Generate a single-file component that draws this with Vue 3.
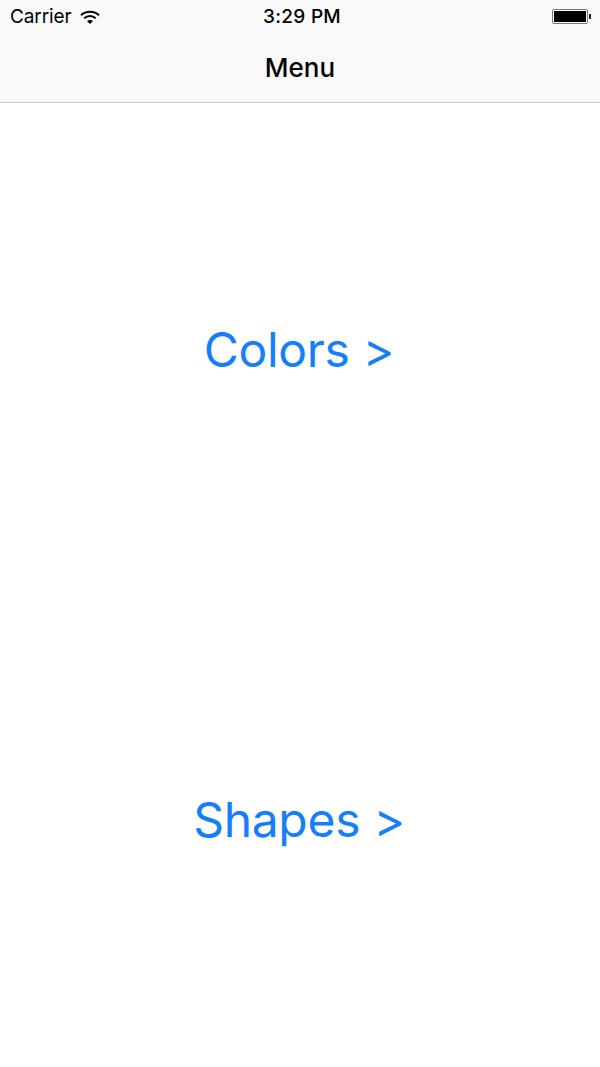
<script setup>
const links = ['Colors >', 'Shapes >'];
</script>

<template>
    <div class="screen">
        <header class="nav-bar">
            <div class="status-bar">
                <div class="status-left">
                    <span>Carrier</span>
                    <svg class="wifi" viewBox="0 0 20 14" width="20" height="14">
                        <path d="M1 5.2C6 .6 14 .6 19 5.2" fill="none" stroke="#000" stroke-width="2" />
                        <path d="M4.2 8.3c3.4-3 8.2-3 11.6 0" fill="none" stroke="#000" stroke-width="2" />
                        <path d="M7 11c1.8-1.4 4.2-1.4 6 0l-3 3z" fill="#000" />
                    </svg>
                </div>
                <span class="time">3:29 PM</span>
                <div class="status-right">
                    <div class="battery"><div class="battery-fill"></div></div>
                    <div class="battery-cap"></div>
                </div>
            </div>
            <div class="title-row">Menu</div>
        </header>
        <main class="menu">
            <a v-for="link in links" :key="link" class="menu-link">{{ link }}</a>
        </main>
    </div>
</template>

<style>
html, body {
    margin: 0;
    background: #fff;
}
</style>

<style scoped>
.screen {
    width: 600px;
    height: 1067px;
    display: flex;
    flex-direction: column;
    font-family: Inter, "Liberation Sans", sans-serif;
    overflow: hidden;
}

.nav-bar {
    height: 102px;
    background: #f9f9f9;
    border-bottom: 1px solid #c8c8c8;
    flex: none;
}

.status-bar {
    height: 33px;
    padding: 0 9px 0 10px;
    display: grid;
    grid-template-columns: 1fr auto 1fr;
    align-items: center;
    font-size: 19px;
    color: #000;
}

.status-left {
    display: flex;
    align-items: center;
    gap: 8px;
    font-weight: 400;
    letter-spacing: -0.1px;
}

.wifi {
    display: block;
}

.time {
    font-weight: 500;
    letter-spacing: 0.3px;
    padding-left: 3px;
}

.status-right {
    display: flex;
    align-items: center;
    justify-content: flex-end;
}

.battery {
    width: 36px;
    height: 15px;
    box-sizing: border-box;
    border: 1px solid #777;
    border-radius: 2px;
    padding: 1px;
}

.battery-fill {
    height: 100%;
    background: #000;
}

.battery-cap {
    width: 2px;
    height: 5px;
    background: #222;
    margin-left: 1px;
}

.title-row {
    height: 68px;
    display: flex;
    align-items: center;
    justify-content: center;
    font-size: 26px;
    font-weight: 500;
    color: #000;
}

.menu {
    flex: 1;
    display: flex;
    flex-direction: column;
    align-items: center;
    padding: 217px 2px 0 0;
    gap: 410px;
}

.menu-link {
    font-size: 48px;
    line-height: 60px;
    font-weight: 400;
    letter-spacing: -0.3px;
    color: #147efb;
    cursor: pointer;
}
</style>
